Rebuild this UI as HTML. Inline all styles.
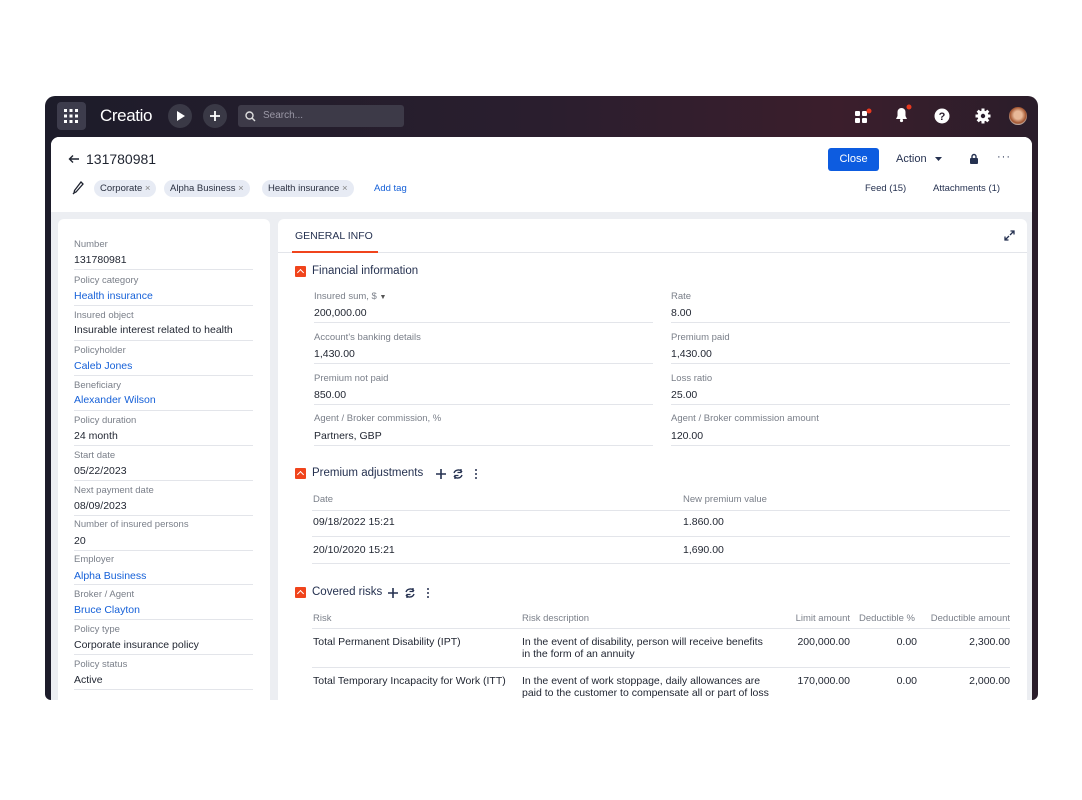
<!DOCTYPE html>
<html><head><style>
*{margin:0;padding:0;box-sizing:border-box}
body{width:1082px;height:800px;background:#fff;font-family:"Liberation Sans",sans-serif;position:relative;overflow:hidden;color:#1f2430}
.a{position:absolute;white-space:nowrap}
.frame{position:absolute;left:45px;top:96px;width:993px;height:604px;border-radius:10px 10px 6px 6px;background:linear-gradient(90deg,#1d1c2a 0%,#2a1e2e 50%,#3b1e2c 80%,#2a1d2a 100%)}
.inner{position:absolute;left:51px;top:137px;width:981px;height:563px;background:#eceef2;border-radius:8px 8px 0 0;overflow:hidden}
.head{position:absolute;left:0;top:0;width:981px;height:75px;background:#fff}
.lbl{font-size:9.5px;color:#7a7f89}
.val{font-size:10.5px;color:#1f2430}
.lnk{font-size:10.5px;color:#1560d8}
.sep{position:absolute;height:1px;background:#e3e5ea}
.chip{position:absolute;top:180px;height:17px;border-radius:9px;background:#e7ebf4;font-size:9.5px;line-height:17px;padding:0 6px;color:#2a3040}
.sec{font-size:11.5px;color:#253150}
.ic{position:absolute;width:11px;height:11px;background:#f0441c;border-radius:1px}
.ic:after{content:"";position:absolute;left:3px;top:4px;width:4px;height:4px;border-left:1.5px solid #fff;border-top:1.5px solid #fff;transform:rotate(45deg)}
.th{font-size:9.5px;color:#7a7f89}
.r{text-align:right}
</style></head><body>
<div class="frame"></div>
<div class="a" style="left:57px;top:102px;width:29px;height:28px;background:#3d3c4c;border-radius:4px"></div>
<svg class="a" style="left:63px;top:108px" width="16" height="16"><g fill="#fff"><rect x="1" y="1" width="3" height="3"/><rect x="6.5" y="1" width="3" height="3"/><rect x="12" y="1" width="3" height="3"/><rect x="1" y="6.5" width="3" height="3"/><rect x="6.5" y="6.5" width="3" height="3"/><rect x="12" y="6.5" width="3" height="3"/><rect x="1" y="12" width="3" height="3"/><rect x="6.5" y="12" width="3" height="3"/><rect x="12" y="12" width="3" height="3"/></g></svg>
<div class="a" style="left:100px;top:106px;font-size:17px;color:#fff;letter-spacing:-0.4px">Creatio</div>
<div class="a" style="left:168px;top:104px;width:24px;height:24px;border-radius:12px;background:#3a3946"></div>
<svg class="a" style="left:176px;top:111px" width="10" height="10"><path d="M1 0L9 5L1 10Z" fill="#fff"/></svg>
<div class="a" style="left:203px;top:104px;width:24px;height:24px;border-radius:12px;background:#3a3946"></div>
<svg class="a" style="left:209px;top:110px" width="12" height="12"><path d="M6 1V11M1 6H11" stroke="#fff" stroke-width="1.8"/></svg>
<div class="a" style="left:238px;top:105px;width:166px;height:22px;border-radius:3px;background:#3d3a48"></div>
<svg class="a" style="left:245px;top:111px" width="11" height="11"><circle cx="4.5" cy="4.5" r="3.5" stroke="#ddd" stroke-width="1.4" fill="none"/><path d="M7 7L10 10" stroke="#ddd" stroke-width="1.4"/></svg>
<div class="a" style="left:263px;top:110px;font-size:10px;color:#9b98a6">Search...</div>
<svg class="a" style="left:854px;top:108px" width="18" height="16"><g fill="#fff"><rect x="1" y="3" width="5" height="5" rx="1"/><rect x="8" y="3" width="5" height="5" rx="1"/><rect x="1" y="10" width="5" height="5" rx="1"/><rect x="8" y="10" width="5" height="5" rx="1"/></g><circle cx="15" cy="3" r="2.5" fill="#e8391f"/></svg>
<svg class="a" style="left:893px;top:104px" width="20" height="20"><path d="M3 15H14L12.5 12V8A4 4 0 0 0 4.5 8V12Z" fill="#fff"/><circle cx="8.5" cy="16.5" r="1.6" fill="#fff"/><circle cx="16" cy="3" r="2.5" fill="#e8391f"/></svg>
<svg class="a" style="left:934px;top:108px" width="16" height="16"><circle cx="8" cy="8" r="7.5" fill="#fff"/><text x="8" y="12" font-size="11" font-weight="bold" text-anchor="middle" fill="#2a1e2e" font-family="Liberation Sans">?</text></svg>
<svg class="a" style="left:975px;top:108px" width="16" height="16"><g fill="#fff"><circle cx="8" cy="8" r="5.5"/><rect x="6.5" y="0.5" width="3" height="15"/><rect x="0.5" y="6.5" width="15" height="3"/><rect x="6.5" y="0.5" width="3" height="15" transform="rotate(45 8 8)"/><rect x="6.5" y="0.5" width="3" height="15" transform="rotate(-45 8 8)"/></g><circle cx="8" cy="8" r="2.2" fill="#2a1e2e"/></svg>
<div class="a" style="left:1009px;top:107px;width:18px;height:18px;border-radius:9px;background:radial-gradient(circle at 50% 45%,#e8b898 30%,#a0522d 60%,#ccc 75%)"></div>

<div class="inner">
 <div class="head"></div>
</div>
<svg class="a" style="left:68px;top:154px" width="12" height="10"><path d="M11 5H1.5M5 1.5L1.5 5L5 8.5" stroke="#1f2430" stroke-width="1.4" fill="none"/></svg>
<div class="a" style="left:86px;top:151px;font-size:14px;color:#1f2430">131780981</div>
<svg class="a" style="left:72px;top:181px" width="12" height="14"><path d="M9 1L11 3L4 11L2 12L2.5 9.5Z M2 12L1 13" stroke="#1f2430" stroke-width="1.3" fill="none"/></svg>
<div class="chip" style="left:94px">Corporate <span style="color:#888">×</span></div>
<div class="chip" style="left:164px">Alpha Business <span style="color:#888">×</span></div>
<div class="chip" style="left:262px">Health insurance <span style="color:#888">×</span></div>
<div class="a" style="left:374px;top:183px;font-size:9.5px;color:#1560d8">Add tag</div>
<div class="a" style="left:828px;top:148px;width:51px;height:23px;background:#0d5ce0;border-radius:3px;color:#fff;font-size:11px;line-height:23px;text-align:center">Close</div>
<div class="a" style="left:896px;top:153px;font-size:11px;color:#253150">Action</div>
<svg class="a" style="left:935px;top:157px" width="8" height="5"><path d="M0 0H7L3.5 4Z" fill="#253150"/></svg>
<svg class="a" style="left:969px;top:153px" width="10" height="12"><rect x="1" y="5" width="8" height="6" rx="1" fill="#253150"/><path d="M3 5V3.5A2 2 0 0 1 7 3.5V5" stroke="#253150" stroke-width="1.4" fill="none"/></svg>
<div class="a" style="left:997px;top:151px;font-size:11px;color:#253150;letter-spacing:1px">···</div>
<div class="a" style="left:865px;top:183px;font-size:9.5px;color:#253150">Feed (15)</div>
<div class="a" style="left:933px;top:183px;font-size:9.5px;color:#253150">Attachments (1)</div>

<div class="a" style="left:58px;top:219px;width:212px;height:481px;background:#fff;border-radius:6px 6px 0 0"></div>
<div class="a" style="left:278px;top:219px;width:749px;height:481px;background:#fff;border-radius:6px 6px 0 0"></div>

<div class="a lbl" style="left:74px;top:239px">Number</div><div class="a val" style="left:74px;top:254px">131780981</div><div class="sep" style="left:74px;top:269px;width:179px"></div>
<div class="a lbl" style="left:74px;top:275px">Policy category</div><div class="a lnk" style="left:74px;top:290px">Health insurance</div><div class="sep" style="left:74px;top:305px;width:179px"></div>
<div class="a lbl" style="left:74px;top:310px">Insured object</div><div class="a val" style="left:74px;top:324px">Insurable interest related to health</div><div class="sep" style="left:74px;top:340px;width:179px"></div>
<div class="a lbl" style="left:74px;top:345px">Policyholder</div><div class="a lnk" style="left:74px;top:360px">Caleb Jones</div><div class="sep" style="left:74px;top:375px;width:179px"></div>
<div class="a lbl" style="left:74px;top:380px">Beneficiary</div><div class="a lnk" style="left:74px;top:394px">Alexander Wilson</div><div class="sep" style="left:74px;top:410px;width:179px"></div>
<div class="a lbl" style="left:74px;top:415px">Policy duration</div><div class="a val" style="left:74px;top:430px">24 month</div><div class="sep" style="left:74px;top:445px;width:179px"></div>
<div class="a lbl" style="left:74px;top:450px">Start date</div><div class="a val" style="left:74px;top:465px">05/22/2023</div><div class="sep" style="left:74px;top:480px;width:179px"></div>
<div class="a lbl" style="left:74px;top:485px">Next payment date</div><div class="a val" style="left:74px;top:500px">08/09/2023</div><div class="sep" style="left:74px;top:515px;width:179px"></div>
<div class="a lbl" style="left:74px;top:519px">Number of insured persons</div><div class="a val" style="left:74px;top:535px">20</div><div class="sep" style="left:74px;top:550px;width:179px"></div>
<div class="a lbl" style="left:74px;top:554px">Employer</div><div class="a lnk" style="left:74px;top:570px">Alpha Business</div><div class="sep" style="left:74px;top:584px;width:179px"></div>
<div class="a lbl" style="left:74px;top:589px">Broker / Agent</div><div class="a lnk" style="left:74px;top:604px">Bruce Clayton</div><div class="sep" style="left:74px;top:619px;width:179px"></div>
<div class="a lbl" style="left:74px;top:624px">Policy type</div><div class="a val" style="left:74px;top:639px">Corporate insurance policy</div><div class="sep" style="left:74px;top:654px;width:179px"></div>
<div class="a lbl" style="left:74px;top:659px">Policy status</div><div class="a val" style="left:74px;top:674px">Active</div><div class="sep" style="left:74px;top:689px;width:179px"></div>

<div class="a" style="left:295px;top:230px;font-size:10.5px;color:#253150">GENERAL INFO</div>
<div class="sep" style="left:278px;top:252px;width:749px"></div>
<div class="a" style="left:292px;top:251px;width:86px;height:2px;background:#f0441c"></div>
<svg class="a" style="left:1004px;top:230px" width="11" height="11"><path d="M6.5 1H10V4.5M10 1L6 5M4.5 10H1V6.5M1 10L5 6" stroke="#253150" stroke-width="1.3" fill="none"/></svg>

<div class="ic" style="left:295px;top:266px"></div>
<div class="a sec" style="left:312px;top:265px">Financial information</div>
<div class="a lbl" style="left:314px;top:291px">Insured sum, $ <span style="font-size:7px;color:#555">▼</span></div><div class="a val" style="left:314px;top:307px">200,000.00</div><div class="sep" style="left:314px;top:322px;width:339px"></div>
<div class="a lbl" style="left:671px;top:291px">Rate</div><div class="a val" style="left:671px;top:307px">8.00</div><div class="sep" style="left:671px;top:322px;width:339px"></div>
<div class="a lbl" style="left:314px;top:332px">Account's banking details</div><div class="a val" style="left:314px;top:348px">1,430.00</div><div class="sep" style="left:314px;top:363px;width:339px"></div>
<div class="a lbl" style="left:671px;top:332px">Premium paid</div><div class="a val" style="left:671px;top:348px">1,430.00</div><div class="sep" style="left:671px;top:363px;width:339px"></div>
<div class="a lbl" style="left:314px;top:373px">Premium not paid</div><div class="a val" style="left:314px;top:389px">850.00</div><div class="sep" style="left:314px;top:404px;width:339px"></div>
<div class="a lbl" style="left:671px;top:373px">Loss ratio</div><div class="a val" style="left:671px;top:389px">25.00</div><div class="sep" style="left:671px;top:404px;width:339px"></div>
<div class="a lbl" style="left:314px;top:413px">Agent / Broker commission, %</div><div class="a val" style="left:314px;top:430px">Partners, GBP</div><div class="sep" style="left:314px;top:445px;width:339px"></div>
<div class="a lbl" style="left:671px;top:413px">Agent / Broker commission amount</div><div class="a val" style="left:671px;top:430px">120.00</div><div class="sep" style="left:671px;top:445px;width:339px"></div>

<div class="ic" style="left:295px;top:468px"></div>
<div class="a sec" style="left:312px;top:467px">Premium adjustments</div>
<svg class="a" style="left:435px;top:468px" width="48" height="12"><path d="M6 1V11M1 6H11" stroke="#253150" stroke-width="1.6"/><path d="M27 4A4.5 4.5 0 0 0 19 5M19 8A4.5 4.5 0 0 0 27 7" stroke="#253150" stroke-width="1.4" fill="none"/><path d="M26 1V4.5H22.5M20 11V7.5H23.5" stroke="#253150" stroke-width="1.3" fill="none"/><circle cx="41" cy="2" r="1" fill="#253150"/><circle cx="41" cy="6" r="1" fill="#253150"/><circle cx="41" cy="10" r="1" fill="#253150"/></svg>
<div class="a th" style="left:313px;top:494px">Date</div><div class="a th" style="left:683px;top:494px">New premium value</div>
<div class="sep" style="left:312px;top:510px;width:698px"></div>
<div class="a val" style="left:313px;top:516px">09/18/2022 15:21</div><div class="a val" style="left:683px;top:516px">1.860.00</div>
<div class="sep" style="left:312px;top:536px;width:698px"></div>
<div class="a val" style="left:313px;top:544px">20/10/2020 15:21</div><div class="a val" style="left:683px;top:544px">1,690.00</div>
<div class="sep" style="left:312px;top:563px;width:698px"></div>

<div class="ic" style="left:295px;top:587px"></div>
<div class="a sec" style="left:312px;top:586px">Covered risks</div>
<svg class="a" style="left:387px;top:587px" width="48" height="12"><path d="M6 1V11M1 6H11" stroke="#253150" stroke-width="1.6"/><path d="M27 4A4.5 4.5 0 0 0 19 5M19 8A4.5 4.5 0 0 0 27 7" stroke="#253150" stroke-width="1.4" fill="none"/><path d="M26 1V4.5H22.5M20 11V7.5H23.5" stroke="#253150" stroke-width="1.3" fill="none"/><circle cx="41" cy="2" r="1" fill="#253150"/><circle cx="41" cy="6" r="1" fill="#253150"/><circle cx="41" cy="10" r="1" fill="#253150"/></svg>
<div class="a th" style="left:313px;top:613px">Risk</div>
<div class="a th" style="left:522px;top:613px">Risk description</div>
<div class="a th r" style="right:232px;top:613px">Limit amount</div>
<div class="a th r" style="right:167px;top:613px">Deductible %</div>
<div class="a th r" style="right:72px;top:613px">Deductible amount</div>
<div class="sep" style="left:312px;top:628px;width:698px"></div>
<div class="a val" style="left:313px;top:636px">Total Permanent Disability (IPT)</div>
<div class="a val" style="left:522px;top:636px;line-height:12px">In the event of disability, person will receive benefits<br>in the form of an annuity</div>
<div class="a val r" style="right:232px;top:636px">200,000.00</div>
<div class="a val r" style="right:165px;top:636px">0.00</div>
<div class="a val r" style="right:72px;top:636px">2,300.00</div>
<div class="sep" style="left:312px;top:667px;width:698px"></div>
<div class="a val" style="left:313px;top:675px">Total Temporary Incapacity for Work (ITT)</div>
<div class="a val" style="left:522px;top:675px;line-height:12px">In the event of work stoppage, daily allowances are<br>paid to the customer to compensate all or part of loss</div>
<div class="a val r" style="right:232px;top:675px">170,000.00</div>
<div class="a val r" style="right:165px;top:675px">0.00</div>
<div class="a val r" style="right:72px;top:675px">2,000.00</div>
<div class="a" style="left:0;top:700px;width:1082px;height:100px;background:#fff"></div>
</body></html>
